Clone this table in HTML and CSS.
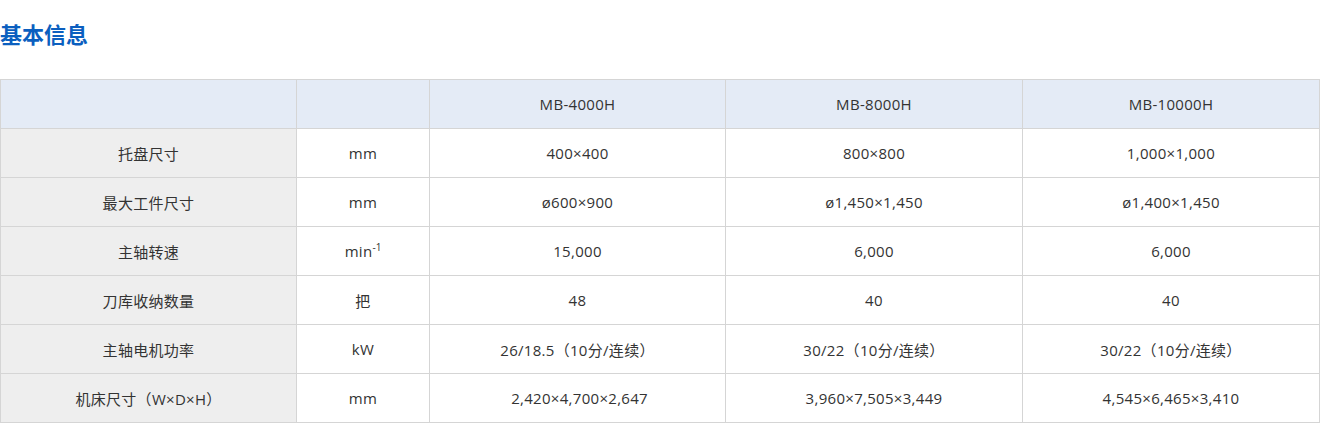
FILE: index.html
```html
<!DOCTYPE html>
<html lang="zh-CN">
<head>
<meta charset="utf-8">
<title>基本信息</title>
<link rel="stylesheet" href="styles.css">
</head>
<body>
<h2 class="title">基本信息</h2>
<table class="spec">
  <colgroup>
    <col class="c-name"><col class="c-unit"><col class="c-val"><col class="c-val2"><col class="c-val2">
  </colgroup>
  <thead>
    <tr><th></th><th></th><th>MB-4000H</th><th>MB-8000H</th><th>MB-10000H</th></tr>
  </thead>
  <tbody>
    <tr><td class="name">托盘尺寸</td><td>mm</td><td>400×400</td><td>800×800</td><td>1,000×1,000</td></tr>
    <tr><td class="name">最大工件尺寸</td><td>mm</td><td>ø600×900</td><td>ø1,450×1,450</td><td>ø1,400×1,450</td></tr>
    <tr><td class="name">主轴转速</td><td>min<sup>-1</sup></td><td>15,000</td><td>6,000</td><td>6,000</td></tr>
    <tr><td class="name">刀库收纳数量</td><td>把</td><td>48</td><td>40</td><td>40</td></tr>
    <tr><td class="name">主轴电机功率</td><td>kW</td><td>26/18.5（10分/连续）</td><td>30/22（10分/连续）</td><td>30/22（10分/连续）</td></tr>
    <tr><td class="name">机床尺寸（W×D×H）</td><td>mm</td><td>&nbsp;2,420×4,700×2,647</td><td>3,960×7,505×3,449</td><td>4,545×6,465×3,410</td></tr>
  </tbody>
</table>
</body>
</html>
```
FILE: styles.css
```css
html, body {
  margin: 0;
  padding: 0;
  background: #ffffff;
}
body {
  font-family: "Open Sans", "Noto Sans", "Noto Sans CJK SC", sans-serif;
  color: #333333;
}
.title {
  margin: 0;
  padding-top: 18px;
  height: 30px;
  line-height: 30px;
  margin-bottom: 31px;
  font-family: "Noto Sans CJK SC", sans-serif;
  font-size: 22px;
  font-weight: 700;
  color: #0b5fbf;
}
.spec {
  border-collapse: collapse;
  table-layout: fixed;
  width: 1320px;
  font-size: 15px;
  letter-spacing: 0.3px;
}
.c-name { width: 296px; }
.c-unit { width: 133px; }
.c-val { width: 296px; }
.c-val2 { width: 297px; }
.spec th, .spec td {
  border: 1px solid #d5d5d5;
  height: 48px;
  padding: 0;
  text-align: center;
  vertical-align: middle;
  font-weight: 400;
  font-family: "Open Sans", "Noto Sans CJK SC", sans-serif;
}
.spec thead th {
  background: #e4ebf6;
}
.spec td.name {
  background: #eeeeee;
}
.spec sup {
  font-size: 10px;
  vertical-align: 6px;
  line-height: 0;
  letter-spacing: 0;
}
```
